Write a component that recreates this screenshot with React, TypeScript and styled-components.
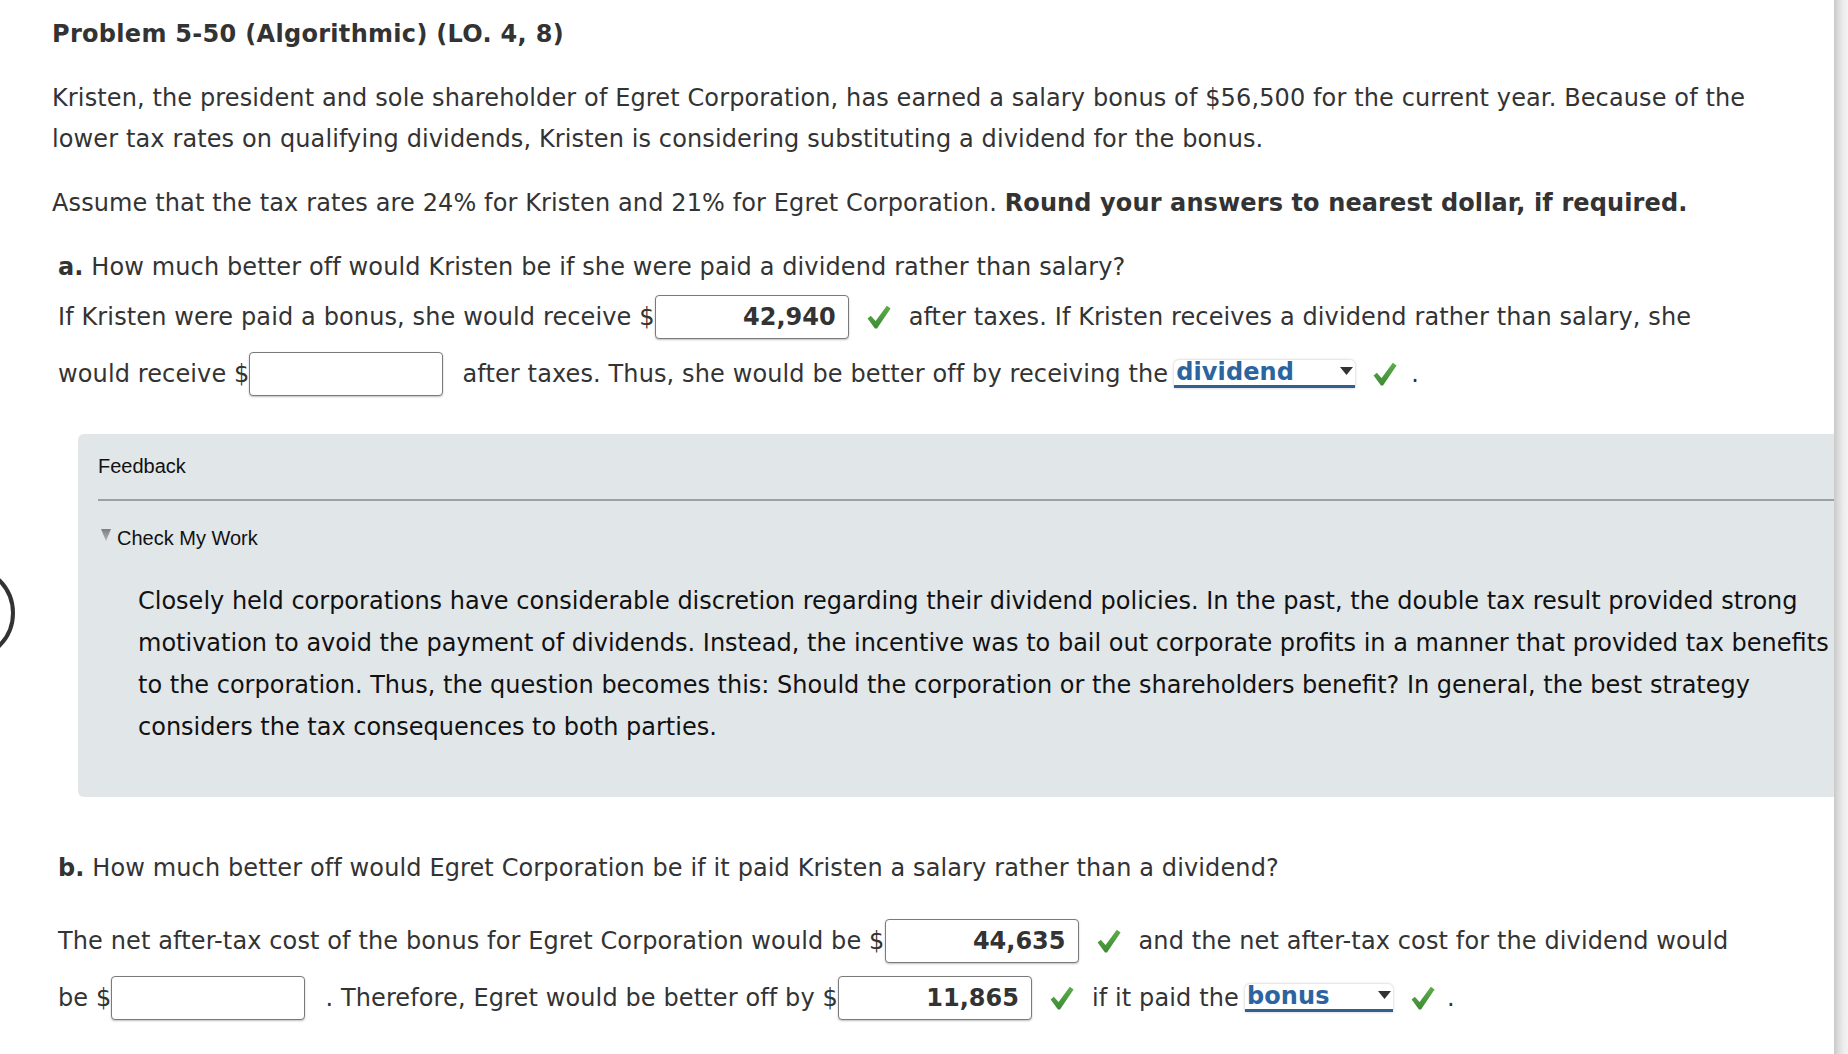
import React from "react"
import styled, { createGlobalStyle } from "styled-components"

const GlobalStyle = createGlobalStyle`
  html, body {
    margin: 0;
    padding: 0;
    background: #ffffff;
    overflow: hidden;
  }
`

const ViewWrapper = styled.div`
  display: flex;
  flex-direction: row;
  width: 1848px;
  height: 1054px;
  position: relative;
  overflow: hidden;
`

const Main = styled.main`
  flex: 1;
  min-width: 0;
  padding: 20px 0 0 52px;
  font-family: "DejaVu Sans", Verdana, sans-serif;
  font-size: 24px;
  letter-spacing: 0.12px;
  color: #333333;
  overflow: hidden;
`

const Scrollbar = styled.div`
  width: 14px;
  height: 100%;
  background: linear-gradient(to right, #c9c9c9 0px, #dedede 5px, #eeeeee 10px, #f2f2f2 14px);
`

const Title = styled.h1`
  margin: 0;
  font-size: 24px;
  font-weight: bold;
  letter-spacing: 0.3px;
  line-height: 28px;
  white-space: nowrap;
`

const Paragraph = styled.p<{ top: number }>`
  margin: ${(props) => props.top}px 0 0 0;
  line-height: 41px;
  white-space: nowrap;

  & b {
    font-weight: bold;
  }
`

const Part = styled.section<{ top: number }>`
  margin-top: ${(props) => props.top}px;
  padding-left: 6px;
`

const Question = styled.div`
  line-height: 41px;
  white-space: nowrap;

  & b {
    font-weight: bold;
  }
`

const Row = styled.div<{ top?: number }>`
  display: flex;
  flex-direction: row;
  align-items: center;
  height: 57px;
  margin-top: ${(props) => props.top || 0}px;
  white-space: nowrap;
`

const AnswerInput = styled.input<{ width?: number }>`
  box-sizing: border-box;
  width: ${(props) => props.width || 194}px;
  height: 44px;
  margin: 0;
  padding: 0 12px 0 8px;
  border: 1px solid #7a7a7a;
  border-radius: 4px;
  box-shadow: 0 1px 2px rgba(0, 0, 0, 0.25);
  background: #ffffff;
  font-family: "DejaVu Sans", Verdana, sans-serif;
  font-size: 24px;
  font-weight: bold;
  color: #333333;
  text-align: right;
  outline: none;
`

const Spacer = styled.span<{ width: number }>`
  display: inline-block;
  width: ${(props) => props.width}px;
  flex-shrink: 0;
`

const CheckIcon = styled.svg<{ left: number; right: number }>`
  flex-shrink: 0;
  margin: 0 ${(props) => props.right}px 0 ${(props) => props.left}px;
`

const SelectBox = styled.div<{ width: number }>`
  box-sizing: border-box;
  display: flex;
  flex-direction: row;
  align-items: center;
  justify-content: space-between;
  width: ${(props) => props.width}px;
  height: 28px;
  margin-left: 6px;
  padding: 0 2px 0 2px;
  background: #ffffff;
  border-radius: 5px 5px 0 0;
  border-bottom: 3px solid #33618f;
  box-shadow: 0 0 3px rgba(0, 0, 0, 0.25);
  color: #2c64a0;
  font-weight: bold;
  line-height: 25px;
`

const Caret = styled.svg`
  flex-shrink: 0;
  margin-top: -2px;
`

const FeedbackBox = styled.div`
  margin: 32px 0 0 26px;
  padding: 20px 0 49px 20px;
  background: #e1e6e9;
  border-radius: 6px 0 0 6px;
  overflow: hidden;
`

const FeedbackLabel = styled.div`
  font-family: "Liberation Sans", Arial, sans-serif;
  font-size: 20px;
  letter-spacing: 0;
  line-height: 24px;
  color: #111111;
`

const Rule = styled.div`
  margin-top: 21px;
  height: 2px;
  background: #9ba1a6;
`

const CheckMyWork = styled.div`
  display: flex;
  flex-direction: row;
  align-items: center;
  margin-top: 25px;
  font-family: "Liberation Sans", Arial, sans-serif;
  font-size: 20px;
  letter-spacing: 0;
  line-height: 24px;
  color: #111111;
`

const Triangle = styled.svg`
  margin: -6px 6px 0 3px;
`

const FeedbackText = styled.p`
  margin: 30px 0 0 0;
  padding-left: 40px;
  line-height: 42px;
  letter-spacing: 0;
  color: #111111;
  white-space: nowrap;
`

const SideArc = styled.svg`
  position: absolute;
  left: 0;
  top: 563px;
`

const Check: React.FC<{ left?: number; right?: number }> = ({
  left = 18,
  right = 18,
}) => (
  <CheckIcon
    left={left}
    right={right}
    width="24"
    height="24"
    viewBox="0 0 24 24"
  >
    <defs>
      <linearGradient id="chk" x1="0" y1="0" x2="0" y2="1">
        <stop offset="0" stopColor="#5cae4a" />
        <stop offset="1" stopColor="#3f8a35" />
      </linearGradient>
    </defs>
    <path
      d="M0.6 13.4 L3.8 10.8 L8.6 16 L19.8 0.8 L23.6 3.4 L10 23.4 L8 23.4 Z"
      fill="url(#chk)"
    />
  </CheckIcon>
)

const Select: React.FC<{ value: string; width: number }> = ({
  value,
  width,
}) => (
  <SelectBox width={width}>
    <span>{value}</span>
    <Caret width="13" height="8" viewBox="0 0 13 8">
      <path d="M0 0 H13 L6.5 8 Z" fill="#333333" />
    </Caret>
  </SelectBox>
)

const App: React.FC = () => {
  return (
    <ViewWrapper>
      <GlobalStyle />
      <SideArc width="20" height="100" viewBox="0 0 20 100">
        <circle cx="-33" cy="50" r="46" fill="none" stroke="#333333" strokeWidth="4" />
      </SideArc>
      <Main>
        <Title>Problem 5-50 (Algorithmic) (LO. 4, 8)</Title>
        <Paragraph top={30}>
          Kristen, the president and sole shareholder of Egret Corporation, has earned a
          salary bonus of $56,500 for the current year. Because of the
          <br />
          lower tax rates on qualifying dividends, Kristen is considering substituting a
          dividend for the bonus.
        </Paragraph>
        <Paragraph top={23}>
          Assume that the tax rates are 24% for Kristen and 21% for Egret Corporation.{" "}
          <b>Round your answers to nearest dollar, if required.</b>
        </Paragraph>

        <Part top={23}>
          <Question>
            <b>a.</b> How much better off would Kristen be if she were paid a dividend
            rather than salary?
          </Question>
          <Row>
            <span>If Kristen were paid a bonus, she would receive $</span>
            <AnswerInput readOnly value="42,940" />
            <Check />
            <span>after taxes. If Kristen receives a dividend rather than salary, she</span>
          </Row>
          <Row>
            <span>would receive $</span>
            <AnswerInput readOnly value="" />
            <Spacer width={19} />
            <span>after taxes. Thus, she would be better off by receiving the</span>
            <Select value="dividend" width={181} />
            <Check left={18} right={14} />
            <span>.</span>
          </Row>
        </Part>

        <FeedbackBox>
          <FeedbackLabel>Feedback</FeedbackLabel>
          <Rule />
          <CheckMyWork>
            <Triangle width="10" height="12" viewBox="0 0 10 12">
              <defs>
                <linearGradient id="tri" x1="0" y1="0" x2="0" y2="1">
                  <stop offset="0" stopColor="#7d7d7d" />
                  <stop offset="1" stopColor="#b4b4b4" />
                </linearGradient>
              </defs>
              <path d="M0 0 H10 L5 12 Z" fill="url(#tri)" />
            </Triangle>
            <span>Check My Work</span>
          </CheckMyWork>
          <FeedbackText>
            Closely held corporations have considerable discretion regarding their dividend
            policies. In the past, the double tax result provided strong
            <br />
            motivation to avoid the payment of dividends. Instead, the incentive was to bail
            out corporate profits in a manner that provided tax benefits
            <br />
            to the corporation. Thus, the question becomes this: Should the corporation or
            the shareholders benefit? In general, the best strategy
            <br />
            considers the tax consequences to both parties.
          </FeedbackText>
        </FeedbackBox>

        <Part top={51}>
          <Question>
            <b>b.</b> How much better off would Egret Corporation be if it paid Kristen a
            salary rather than a dividend?
          </Question>
          <Row top={23}>
            <span>The net after-tax cost of the bonus for Egret Corporation would be $</span>
            <AnswerInput readOnly value="44,635" />
            <Check />
            <span>and the net after-tax cost for the dividend would</span>
          </Row>
          <Row>
            <span>be $</span>
            <AnswerInput readOnly value="" />
            <Spacer width={20} />
            <span>. Therefore, Egret would be better off by $</span>
            <AnswerInput readOnly value="11,865" />
            <Check />
            <span>if it paid the</span>
            <Select value="bonus" width={148} />
            <Check left={18} right={12} />
            <span>.</span>
          </Row>
        </Part>
      </Main>
      <Scrollbar />
    </ViewWrapper>
  )
}

export default App
